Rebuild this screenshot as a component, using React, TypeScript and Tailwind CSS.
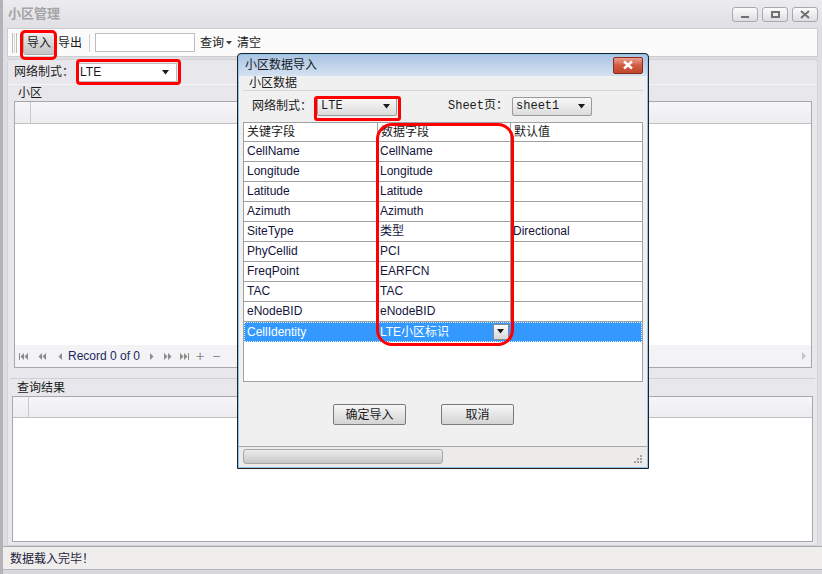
import React from "react";

const rows: [string, string, string][] = [
  ["CellName", "CellName", ""],
  ["Longitude", "Longitude", ""],
  ["Latitude", "Latitude", ""],
  ["Azimuth", "Azimuth", ""],
  ["SiteType", "类型", "Directional"],
  ["PhyCellid", "PCI", ""],
  ["FreqPoint", "EARFCN", ""],
  ["TAC", "TAC", ""],
  ["eNodeBID", "eNodeBID", ""],
];

function Arrow({ className = "" }: { className?: string }) {
  return (
    <svg width="8" height="5" viewBox="0 0 8 5" className={className}>
      <path d="M0 0h7L3.5 4.5z" fill="#1a1a1a" />
    </svg>
  );
}

function PagerIcon({ kind }: { kind: string }) {
  const c = "#8c8c8c";
  return (
    <svg width="12" height="9" viewBox="0 0 12 9">
      {kind === "first" && (
        <g fill={c}>
          <rect x="1" y="1" width="1" height="7" />
          <path d="M6 1v7L2.5 4.5z" />
          <path d="M10 1v7L6.5 4.5z" />
        </g>
      )}
      {kind === "prevp" && (
        <g fill={c}>
          <path d="M6 1v7L2.5 4.5z" />
          <path d="M10 1v7L6.5 4.5z" />
        </g>
      )}
      {kind === "prev" && <path d="M8 1v7L4.5 4.5z" fill={c} />}
      {kind === "next" && <path d="M4 1v7L7.5 4.5z" fill={c} />}
      {kind === "nextp" && (
        <g fill={c}>
          <path d="M2 1v7L5.5 4.5z" />
          <path d="M6 1v7L9.5 4.5z" />
        </g>
      )}
      {kind === "last" && (
        <g fill={c}>
          <path d="M2 1v7L5.5 4.5z" />
          <path d="M6 1v7L9.5 4.5z" />
          <rect x="10" y="1" width="1" height="7" />
        </g>
      )}
    </svg>
  );
}

function WinBtn({ children }: { children: React.ReactNode }) {
  return (
    <div className="w-[26px] h-[15px] rounded-[3px] border border-[#a9a9ad] bg-gradient-to-b from-[#fbfbfb] to-[#dedee2] flex items-center justify-center">
      {children}
    </div>
  );
}

export default function App() {
  return (
    <div className="relative w-[822px] h-[574px] overflow-hidden bg-[#dfdfe3] text-[12px] text-[#1a1a1a] font-['Liberation_Sans','Noto_Sans_CJK_SC',sans-serif]">
      <div className="flex flex-col h-full border-l-[3px] border-[#b4b4b8]">
        {/* title bar */}
        <div className="h-[28px] flex items-center pl-[5px] pr-[4px] bg-gradient-to-b from-[#ececef] to-[#e0e0e4]">
          <span className="text-[13px] font-bold text-[#a4a4a8]">小区管理</span>
          <div className="ml-auto flex gap-[4px] items-center">
            <WinBtn>
              <div className="w-[8px] h-[2px] bg-[#707074] mt-[5px]" />
            </WinBtn>
            <WinBtn>
              <div className="w-[9px] h-[7px] border-[2px] border-[#707074]" />
            </WinBtn>
            <WinBtn>
              <svg width="10" height="9" viewBox="0 0 10 9">
                <path d="M1 1l8 7M9 1l-8 7" stroke="#707074" strokeWidth="2" />
              </svg>
            </WinBtn>
          </div>
        </div>

        {/* toolbar */}
        <div className="mx-[4px] h-[29px] border border-[#cdcdd1] bg-[#fbfbfb] flex items-center pl-[4px]">
          <div className="flex gap-[1px] h-[20px] mr-[6px]">
            <div className="w-[1px] bg-[#bdbdbd]" />
            <div className="w-[1px] bg-[#d8d8d8]" />
            <div className="w-[1px] bg-[#bdbdbd]" />
          </div>
          <div className="w-[32px] h-[24px] rounded-[3px] border border-[#a8a8a8] bg-gradient-to-b from-[#f2f2f2] via-[#d7d7d7] to-[#c4c4c4] flex items-center justify-center">
            导入
          </div>
          <span className="ml-[3px]">导出</span>
          <div className="w-[1px] h-[18px] bg-[#d0d0d0] ml-[7px] mr-[5px]" />
          <div className="w-[100px] h-[19px] bg-white border border-[#bdbdc0]" />
          <span className="ml-[5px]">查询</span>
          <svg width="6" height="4" viewBox="0 0 6 4" className="ml-[2px]">
            <path d="M0 0h6L3 3.5z" fill="#404040" />
          </svg>
          <span className="ml-[5px]">清空</span>
        </div>

        {/* main panel */}
        <div className="mx-[4px] mt-[2px] flex-1 flex flex-col border border-[#d2d2d6] rounded-t-[3px] bg-[#e8e8ec] min-h-0">
          <div className="h-[24px] flex items-center pl-[6px]">
            <span>网络制式：</span>
            <div className="ml-[3px] w-[100px] h-[19px] bg-white border border-[#c0c0c4] flex items-center pl-[2px] pr-[6px]">
              <span>LTE</span>
              <Arrow className="ml-auto" />
            </div>
          </div>

          {/* 小区 group */}
          <div className="h-[17px] flex items-end pl-[10px] border-t border-[#f4f4f6]">
            <span className="leading-[15px]">小区</span>
          </div>
          <div className="ml-[6px] mr-[5px] h-[267px] border border-[#a8a8ac] bg-white flex flex-col">
            <div className="h-[22px] flex border-b border-[#c0c0c4] bg-gradient-to-b from-[#f6f6f8] to-[#ededf0]">
              <div className="w-[16px] border-r border-[#c8c8cc]" />
            </div>
            <div className="flex-1" />
            <div className="h-[22px] flex items-center pl-[3px] bg-[#f3f3f5] text-[#1c2a5e]">
              <PagerIcon kind="first" />
              <span className="w-[6px]" />
              <PagerIcon kind="prevp" />
              <span className="w-[6px]" />
              <PagerIcon kind="prev" />
              <span className="ml-[2px]">Record 0 of 0</span>
              <span className="w-[6px]" />
              <PagerIcon kind="next" />
              <span className="w-[4px]" />
              <PagerIcon kind="nextp" />
              <span className="w-[4px]" />
              <PagerIcon kind="last" />
              <span className="ml-[6px] text-[#8c8c8c] text-[14px] leading-none">+</span>
              <span className="ml-[8px] text-[#8c8c8c] text-[14px] leading-none">−</span>
              <svg width="6" height="8" viewBox="0 0 6 8" className="ml-auto mr-[4px]">
                <path d="M1 0v8l4-4z" fill="#c4c4c8" />
              </svg>
            </div>
          </div>

          <div className="h-[11px] border-b border-[#d0d0d4] mx-[2px]" />
          {/* 查询结果 */}
          <div className="h-[17px] flex items-end pl-[9px]">
            <span className="leading-[15px]">查询结果</span>
          </div>
          <div className="ml-[4px] mr-[4px] h-[146px] border border-[#a8a8ac] bg-white flex flex-col">
            <div className="h-[21px] flex border-b border-[#c0c0c4] bg-gradient-to-b from-[#f6f6f8] to-[#ededf0]">
              <div className="w-[16px] border-r border-[#c8c8cc]" />
            </div>
          </div>
          <div className="flex-1" />
        </div>

        {/* status bar */}
        <div className="h-[23px] border-t border-[#a8a8ac] bg-[#f0eeed] flex items-center pl-[7px] text-[#1c1c3a] font-['Noto_Sans_CJK_SC',sans-serif]">
          数据载入完毕！
        </div>
        <div className="h-[5px] bg-[#d8d8dc] border-t border-[#b8b8bc]" />
      </div>

      {/* red annotations on main window */}
      <div className="absolute left-[20px] top-[30px] w-[37px] h-[30px] border-[3px] border-[#ff0000] rounded-[5px]" />
      <div className="absolute left-[76px] top-[59px] w-[105px] h-[26px] border-[3px] border-[#ff0000] rounded-[4px]" />

      {/* dialog */}
      <div className="absolute left-[237px] top-[53px] w-[412px] h-[416px] border border-[#202020] rounded-t-[4px] bg-[#8cc4ec] p-[1px] flex flex-col">
        <div className="h-[22px] flex items-center pl-[6px] pr-[4px] rounded-t-[3px] bg-gradient-to-b from-[#aac4e4] to-[#d4e2f1]">
          <span className="text-[#1a1a1a]">小区数据导入</span>
          <div className="ml-auto w-[30px] h-[17px] rounded-[2px] border border-[#8b2a1a] bg-gradient-to-b from-[#e8a090] via-[#d25a40] to-[#c04830] flex items-center justify-center">
            <svg width="12" height="10" viewBox="0 0 12 10">
              <path d="M2 1.5l8 7M10 1.5l-8 7" stroke="#ffffff" strokeWidth="2.4" />
            </svg>
          </div>
        </div>
        <div className="flex-1 bg-[#f0f0f0] flex flex-col px-[4px]">
          <div className="h-[15px] flex items-end pl-[6px] border-b border-[#d6d6d6]">
            <span className="leading-[14px]">小区数据</span>
          </div>
          <div className="h-[31px] flex items-center pl-[9px]">
            <span>网络制式：</span>
            <div className="ml-[5px] w-[80px] h-[19px] rounded-[2px] border border-[#9a9a9a] bg-gradient-to-b from-[#f8f8f8] to-[#dcdcdc] flex items-center pl-[3px] pr-[5px] font-['Liberation_Mono',monospace] text-[12px]">
              <span>LTE</span>
              <Arrow className="ml-auto" />
            </div>
            <span className="ml-[51px] font-['Liberation_Mono','Noto_Sans_CJK_SC',monospace] text-[12px]">Sheet页：</span>
            <div className="ml-[4px] w-[80px] h-[19px] rounded-[2px] border border-[#9a9a9a] bg-gradient-to-b from-[#f8f8f8] to-[#dcdcdc] flex items-center pl-[3px] pr-[5px] font-['Liberation_Mono',monospace] text-[12px]">
              <span>sheet1</span>
              <Arrow className="ml-auto" />
            </div>
          </div>
          {/* grid */}
          <div className="h-[260px] border border-[#a0a0a0] bg-white flex flex-col">
            <div className="h-[19px] flex border-b border-[#a0a0a0] bg-white">
              <div className="w-[134px] border-r border-[#a0a0a0] pl-[3px] flex items-center">关键字段</div>
              <div className="w-[133px] border-r border-[#a0a0a0] pl-[3px] flex items-center">数据字段</div>
              <div className="flex-1 pl-[3px] flex items-center">默认值</div>
            </div>
            {rows.map((r) => (
              <div key={r[0]} className="h-[20px] flex border-b border-[#a0a0a0] text-[#14143c]">
                <div className="w-[134px] border-r border-[#a0a0a0] pl-[3px] flex items-center">{r[0]}</div>
                <div className="w-[133px] border-r border-[#a0a0a0] pl-[2px] flex items-center">{r[1]}</div>
                <div className="flex-1 pl-[2px] flex items-center">{r[2]}</div>
              </div>
            ))}
            <div className="h-[20px] flex bg-[#3399ff] text-white border border-dotted border-[#e8f2ff]">
              <div className="w-[133px] pl-[2px] flex items-center">CellIdentity</div>
              <div className="w-[133px] pl-[2px] flex items-center">
                <span>LTE小区标识</span>
                <div className="ml-auto mr-[2px] w-[16px] h-[16px] border border-[#888] bg-gradient-to-b from-[#fafafa] to-[#d8d8d8] flex items-center justify-center">
                  <Arrow />
                </div>
              </div>
              <div className="flex-1" />
            </div>
            <div className="flex-1" />
          </div>
          <div className="h-[64px] flex items-center gap-[35px] pl-[90px] pt-[2px]">
            <div className="w-[73px] h-[21px] rounded-[2px] border border-[#7a7a7a] bg-gradient-to-b from-[#f6f6f6] to-[#d4d4d4] flex items-center justify-center">确定导入</div>
            <div className="w-[73px] h-[21px] rounded-[2px] border border-[#7a7a7a] bg-gradient-to-b from-[#f6f6f6] to-[#d4d4d4] flex items-center justify-center">取消</div>
          </div>
        </div>
        <div className="h-[22px] bg-[#ecebea] border-t border-[#a8a8a8] flex items-center px-[4px]">
          <div className="w-[200px] h-[15px] rounded-[3px] border border-[#a8a8a8] bg-gradient-to-b from-[#ececec] to-[#c8c8c8]" />
          <svg width="10" height="10" viewBox="0 0 10 10" className="ml-auto mt-[4px]">
            <g fill="#a0a0a0">
              <rect x="7" y="1" width="2" height="2" />
              <rect x="4" y="4" width="2" height="2" />
              <rect x="7" y="4" width="2" height="2" />
              <rect x="1" y="7" width="2" height="2" />
              <rect x="4" y="7" width="2" height="2" />
              <rect x="7" y="7" width="2" height="2" />
            </g>
          </svg>
        </div>
      </div>

      {/* red annotations on dialog */}
      <div className="absolute left-[314px] top-[96px] w-[87px] h-[25px] border-[3px] border-[#ff0000] rounded-[3px]" />
      <div className="absolute left-[376px] top-[123px] w-[138px] h-[223px] border-[3px] border-[#ff0000] rounded-[16px]" />
    </div>
  );
}
